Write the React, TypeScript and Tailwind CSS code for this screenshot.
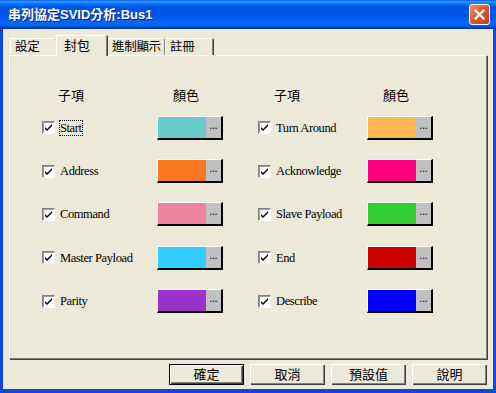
import React from 'react';

const cjk = '"Liberation Sans", "Noto Sans CJK TC", sans-serif';
const serif = '"Liberation Serif", "Noto Sans CJK TC", serif';

const leftItems: [string, string][] = [
  ['Start', '#66CCCC'],
  ['Address', '#FA7820'],
  ['Command', '#EE829E'],
  ['Master Payload', '#33CCFF'],
  ['Parity', '#9933CC'],
];

const rightItems: [string, string][] = [
  ['Turn Around', '#FFB755'],
  ['Acknowledge', '#FF0080'],
  ['Slave Payload', '#33CC33'],
  ['End', '#CC0000'],
  ['Describe', '#0000FF'],
];

const CheckBox = () => (
  <span className="flex h-[13px] w-[13px] shrink-0 items-center justify-center border border-t-[#808080] border-l-[#808080] border-b-white border-r-white bg-white shadow-[inset_1px_1px_0_#9a9a9a]">
    <svg width="9" height="9" viewBox="0 0 9 9">
      <path d="M1 4 L3 6 L8 1 L8 3 L3 8 L1 6 Z" fill="#000" />
    </svg>
  </span>
);

const ColorButton = ({ color }: { color: string }) => (
  <div className="flex h-[24px] w-[66px] border-t border-l border-white border-b-2 border-r-2 border-b-black border-r-black">
    <div className="flex-1" style={{ backgroundColor: color }} />
    <div className="flex w-[15px] justify-center bg-[#C0C0C0] pt-[1px] text-[10px] leading-[14px] text-black">
      ...
    </div>
  </div>
);

const Block = ({ items, cols, focusFirst }: { items: [string, string][]; cols: string; focusFirst?: boolean }) => (
  <div className={`grid content-start ${cols}`}>
    <div className="h-[20px] pl-[16px] text-[13px] leading-[20px] text-black" style={{ fontFamily: cjk }}>
      子項
    </div>
    <div className="h-[20px] pl-[16px] text-[13px] leading-[20px] text-black" style={{ fontFamily: cjk }}>
      顏色
    </div>
    {items.map(([label, color], i) => (
      <React.Fragment key={label}>
        <div className="flex h-[43.4px] items-center gap-[5px]">
          <CheckBox />
          <span
            className={`whitespace-nowrap text-[12.5px] leading-[14px] tracking-[-0.4px] text-black ${
              focusFirst && i === 0 ? 'outline-1 outline-dotted outline-black' : ''
            }`}
            style={{ fontFamily: serif }}
          >
            {label}
          </span>
        </div>
        <div className="flex h-[43.4px] items-center">
          <ColorButton color={color} />
        </div>
      </React.Fragment>
    ))}
  </div>
);

const tabs = [
  { label: '設定', w: 'w-[47px]' },
  { label: '封包', w: 'w-[51px]', active: true },
  { label: '進制顯示', w: 'w-[58px]' },
  { label: '註冊', w: 'w-[48px]' },
];

const buttons = ['確定', '取消', '預設值', '說明'];

export default function App() {
  return (
    <div className="flex h-[393px] w-[496px] flex-col bg-[#0A48DC]">
      {/* title bar */}
      <div className="flex h-[29px] shrink-0 items-center justify-between bg-[linear-gradient(to_bottom,#0058EE_0%,#3593FF_5%,#288EFF_8%,#127DFF_11%,#036FFC_14%,#0262EE_18%,#0057E5_24%,#0054E3_30%,#0055EB_56%,#005BF5_66%,#026AFE_76%,#0062EF_86%,#0052D6_92%,#0040AB_96%,#003092_100%)] pl-[8px] pr-[6px]">
        <span
          className="text-[13px] font-bold leading-none text-white [text-shadow:1px_1px_0_#0A246A]"
          style={{ fontFamily: cjk }}
        >
          串列協定SVID分析:Bus1
        </span>
        <div className="flex h-[21px] w-[21px] items-center justify-center rounded-[3px] border border-white bg-[linear-gradient(135deg,#F0906E_0%,#E2573A_45%,#C63A1C_100%)]">
          <svg width="11" height="11" viewBox="0 0 11 11">
            <path d="M1.5 1.5 L9.5 9.5 M9.5 1.5 L1.5 9.5" stroke="#fff" strokeWidth="2.2" strokeLinecap="square" />
          </svg>
        </div>
      </div>

      {/* body */}
      <div className="mx-[3px] mb-[4px] flex flex-1 flex-col bg-[#ECE9D8] px-[6px] pt-[5px]">
        {/* tabs */}
        <div className="flex h-[21px] items-end pl-[1px]">
          {tabs.map((t) =>
            t.active ? (
              <div
                key={t.label}
                className={`relative z-10 -mb-px flex h-[21px] ${t.w} -ml-[1px] items-center whitespace-nowrap rounded-t-[2px] border-t border-l border-white bg-[#ECE9D8] pl-[7px] text-[13px] text-black shadow-[inset_-1px_0_0_#808080,1px_0_0_#404040]`}
                style={{ fontFamily: cjk }}
              >
                {t.label}
              </div>
            ) : (
              <div
                key={t.label}
                className={`flex h-[17px] ${t.w} items-center whitespace-nowrap rounded-t-[2px] border-t border-l border-white pl-[4px] text-[12.5px] tracking-[-0.3px] text-black shadow-[inset_-1px_0_0_#808080,1px_0_0_#404040]`}
                style={{ fontFamily: cjk }}
              >
                {t.label}
              </div>
            )
          )}
        </div>

        {/* panel */}
        <div className="flex h-[304px] items-start border-t border-l border-white border-r border-b border-r-[#808080] border-b-[#808080] pl-[32px] pt-[30px] shadow-[1px_1px_0_#404040]">
          <Block items={leftItems} cols="grid-cols-[115px_101px]" focusFirst />
          <Block items={rightItems} cols="grid-cols-[109px_66px]" />
        </div>

        {/* buttons */}
        <div className="mt-[5px] flex justify-end gap-[6px]">
          {buttons.map((b, i) => (
            <div
              key={b}
              className={`flex h-[21px] w-[75px] items-center justify-center bg-[#ECE9D8] text-[13px] text-black ${
                i === 0
                  ? 'border border-black shadow-[inset_1px_1px_0_#fff,inset_-1px_-1px_0_#404040,inset_-2px_-2px_0_#808080]'
                  : 'shadow-[inset_1px_1px_0_#fff,inset_-1px_-1px_0_#404040,inset_-2px_-2px_0_#808080]'
              }`}
              style={{ fontFamily: cjk }}
            >
              {b}
            </div>
          ))}
        </div>
      </div>
    </div>
  );
}
